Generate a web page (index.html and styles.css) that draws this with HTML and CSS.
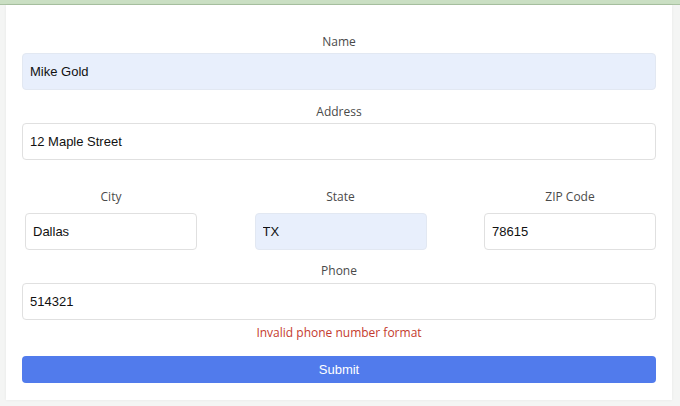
FILE: index.html
```html
<!DOCTYPE html>
<html lang="en">
<head>
<meta charset="utf-8">
<title>Address form</title>
<link rel="stylesheet" href="styles.css">
</head>
<body>
<div class="topbar"></div>
<main class="page">
  <form class="card">
    <div class="group">
      <label class="label" for="name">Name</label>
      <input class="input autofill" id="name" value="Mike Gold">
    </div>
    <div class="group">
      <label class="label" for="address">Address</label>
      <input class="input" id="address" value="12 Maple Street">
    </div>
    <div class="row">
      <div class="col">
        <label class="label" for="city">City</label>
        <input class="input" id="city" value="Dallas">
      </div>
      <div class="col">
        <label class="label" for="state">State</label>
        <input class="input autofill" id="state" value="TX">
      </div>
      <div class="col">
        <label class="label" for="zip">ZIP Code</label>
        <input class="input" id="zip" value="78615">
      </div>
    </div>
    <div class="group phone">
      <label class="label" for="phone">Phone</label>
      <input class="input" id="phone" value="514321">
      <p class="error">Invalid phone number format</p>
    </div>
    <button class="submit" type="button">Submit</button>
  </form>
</main>
</body>
</html>
```
FILE: styles.css
```css
* { box-sizing: border-box; }
html, body { margin: 0; padding: 0; }
body {
  background: #f4f5f4;
  width: 680px;
  height: 406px;
  overflow: hidden;
  font-family: "Open Sans", "Liberation Sans", sans-serif;
}
.topbar {
  height: 5px;
  background: #cadfc3;
  border-bottom: 1px solid #a9c2a2;
}
.page {
  padding: 0 8px 0 6px;
}
.card {
  background: #fff;
  height: 395px;
  padding: 28px 16px 17px 16px;
  box-shadow: 0 0 3px rgba(0,0,0,0.06);
}
.group { margin-bottom: 13px; }
.label {
  display: block;
  text-align: center;
  font-size: 12px;
  line-height: 18px;
  color: #4a4a4a;
  margin-bottom: 2px;
}
.input {
  display: block;
  width: 100%;
  height: 37px;
  border: 1px solid #e0e0e0;
  border-radius: 4px;
  background: #fff;
  padding: 0 7px;
  font-family: "Liberation Sans", Arial, sans-serif;
  font-size: 13px;
  color: #111;
  outline: none;
}
.autofill { background: #e8effc; border-color: #e2e8f2; }
.row {
  display: grid;
  grid-template-columns: repeat(3, 172px);
  column-gap: 57.5px;
  padding-left: 3px;
  margin-top: 28px;
  margin-bottom: 12px;
}
.row .label { margin-bottom: 7px; }
.phone { margin-bottom: 0; }
.phone .label { margin-bottom: 3px; }
.error {
  margin: 4px 0 0 0;
  text-align: center;
  font-size: 12px;
  line-height: 18px;
  color: #c43a2e;
}
.submit {
  display: block;
  width: 100%;
  height: 27px;
  margin-top: 14px;
  border: none;
  border-radius: 4px;
  background: #517bec;
  color: #fff;
  font-family: "Liberation Sans", Arial, sans-serif;
  font-size: 13px;
  padding: 0;
}
```
